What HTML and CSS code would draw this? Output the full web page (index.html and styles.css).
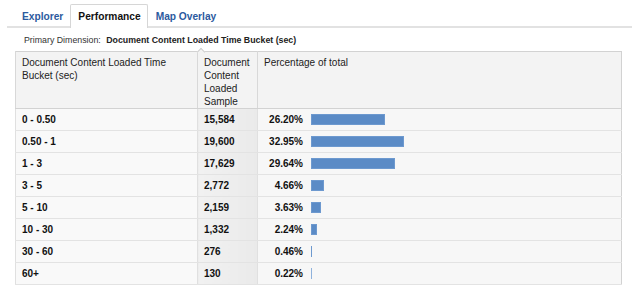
FILE: index.html
```html
<!DOCTYPE html>
<html>
<head>
    <title>Performance</title>
    <link rel="stylesheet" href="styles.css">
</head>
<body>
    <div class="tabs">
        <a class="tab">Explorer</a>
        <a class="tab active">Performance</a>
        <a class="tab">Map Overlay</a>
    </div>
    <div class="dimension">
        Primary Dimension: <b>Document Content Loaded Time Bucket (sec)</b>
    </div>
    <div class="table-wrap">
        <span class="notch"></span>
        <table class="report">
            <thead>
                <tr>
                    <th class="col-bucket">Document Content Loaded Time Bucket (sec)</th>
                    <th class="col-sample">Document Content Loaded Sample</th>
                    <th class="col-pct">Percentage of total</th>
                </tr>
            </thead>
            <tbody id="rows"></tbody>
        </table>
    </div>

    <script>
        const data = [
            { bucket: "0 - 0.50", sample: "15,584", pct: 26.20 },
            { bucket: "0.50 - 1", sample: "19,600", pct: 32.95 },
            { bucket: "1 - 3", sample: "17,629", pct: 29.64 },
            { bucket: "3 - 5", sample: "2,772", pct: 4.66 },
            { bucket: "5 - 10", sample: "2,159", pct: 3.63 },
            { bucket: "10 - 30", sample: "1,332", pct: 2.24 },
            { bucket: "30 - 60", sample: "276", pct: 0.46 },
            { bucket: "60+", sample: "130", pct: 0.22 }
        ];

        const rows = document.getElementById('rows');
        data.forEach(row => {
            const tr = document.createElement('tr');
            const width = Math.max(1, Math.round(row.pct * 2.83));
            const faint = row.pct < 0.3 ? ' faint' : '';
            tr.innerHTML = `
                <td class="col-bucket">${row.bucket}</td>
                <td class="col-sample">${row.sample}</td>
                <td class="col-pct">
                    <div class="pct-cell">
                        <span class="pct">${row.pct.toFixed(2)}%</span>
                        <span class="bar${faint}" style="width: ${width}px"></span>
                    </div>
                </td>
            `;
            rows.appendChild(tr);
        });
    </script>
</body>
</html>
```

FILE: styles.css
```css
body {
    margin: 0;
    padding: 0;
    background-color: #fff;
    color: #222;
    font-family: 'Liberation Sans', Arial, sans-serif;
}

.tabs {
    display: flex;
    margin-left: 7px;
    padding: 4px 0 0 7px;
    border-bottom: 2px solid #e2e2e2;
}

.tab {
    display: block;
    height: 22px;
    line-height: 23px;
    padding: 0 6px 0 7px;
    margin-bottom: -2px;
    border: 1px solid transparent;
    border-bottom: none;
    font-size: 10.2px;
    font-weight: bold;
    color: #2c5a9e;
    border-radius: 2px 2px 0 0;
}

.tab.active {
    color: #111;
    background-color: #fff;
    border-color: #d6d6d6;
    height: 23px;
}

.dimension {
    margin: 6px 0 5px 24px;
    line-height: 12px;
    font-size: 8.8px;
    color: #333;
}

.dimension b {
    margin-left: 3px;
    color: #222;
}

.table-wrap {
    position: relative;
    margin-left: 15px;
    width: 607px;
}

.notch {
    position: absolute;
    left: 183px;
    top: -2px;
    width: 5px;
    height: 5px;
    background-color: #f3f3f3;
    border-top: 1px solid #cfcfcf;
    border-left: 1px solid #cfcfcf;
    transform: rotate(45deg);
}

.report {
    width: 100%;
    border-collapse: collapse;
    border: 1px solid #d2d2d2;
    font-size: 10px;
    table-layout: fixed;
}

.report th {
    height: 55px;
    padding: 4px 6px 0;
    text-align: left;
    vertical-align: top;
    font-weight: normal;
    line-height: 13px;
    color: #222;
    background-color: #f3f3f3;
    border-bottom: 1px solid #d2d2d2;
    border-left: 1px solid #d8d8d8;
    box-sizing: border-box;
}

.col-bucket {
    width: 182px;
}

.col-sample {
    width: 60px;
}

.report td {
    height: 21px;
    padding: 0 6px;
    font-weight: bold;
    color: #111;
    background-color: #f9f9f9;
    border-bottom: 1px solid #e3e3e3;
    border-left: 1px solid #e0e0e0;
}

.report td.col-sample {
    background: linear-gradient(to right, #f1f1f1, #eaeaea);
}

.report td.col-pct {
    padding: 0;
    background-color: #f7f7f7;
}

.pct-cell {
    display: flex;
    align-items: center;
}

.pct {
    width: 45px;
    text-align: right;
}

.bar {
    display: block;
    height: 11px;
    margin-left: 8px;
    background-color: #5b8bc6;
    box-shadow: inset 0 0 0 1px #6d99cf;
}

.bar.faint {
    background-color: #8fb2dc;
    box-shadow: none;
}
```
